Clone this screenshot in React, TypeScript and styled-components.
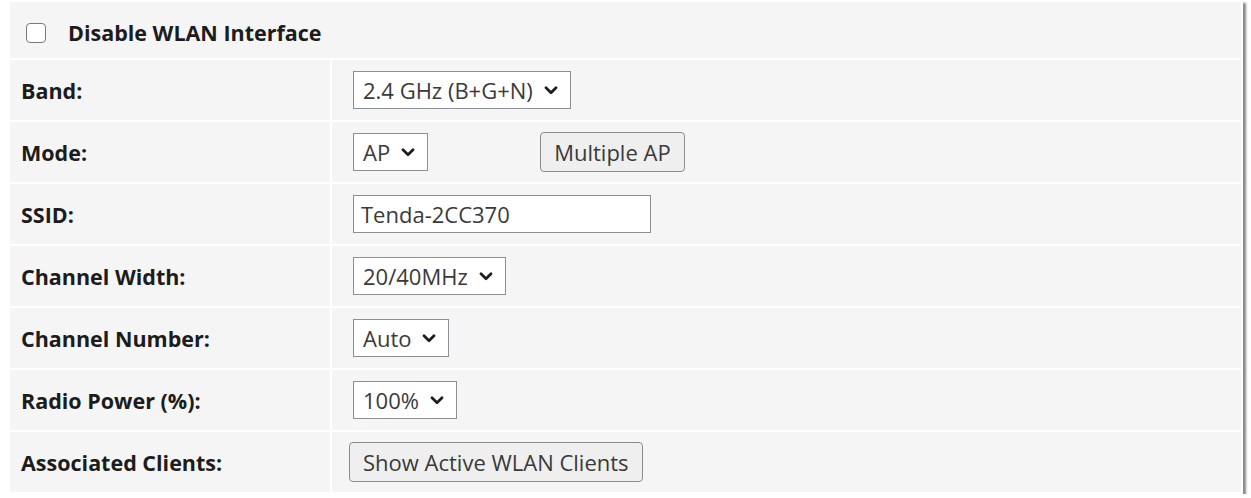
import { createGlobalStyle, styled } from "styled-components";

const GlobalStyle = createGlobalStyle`
    html, body {
        margin: 0;
        padding: 0;
        background: #ffffff;
        font-family: "Open Sans", "Liberation Sans", sans-serif;
    }
`;

type Row = {
    label: string;
    content: React.ReactNode;
};

const Chevron = () => (
    <svg width="14" height="9" viewBox="0 0 14 9" aria-hidden="true">
        <path
            d="M2 1.8 L7 6.8 L12 1.8"
            fill="none"
            stroke="#1c1c1c"
            strokeWidth="2.7"
            strokeLinecap="round"
            strokeLinejoin="round"
        />
    </svg>
);

const Dropdown = ({ value, options }: { value: string; options: string[] }) => (
    <SelectBox>
        <select defaultValue={value}>
            {options.map((o) => (
                <option key={o}>{o}</option>
            ))}
        </select>
        <Chevron />
    </SelectBox>
);

const App = () => {
    const rows: Row[] = [
        {
            label: "Band:",
            content: (
                <Dropdown
                    value="2.4 GHz (B+G+N)"
                    options={["2.4 GHz (B)", "2.4 GHz (G)", "2.4 GHz (N)", "2.4 GHz (B+G+N)"]}
                />
            ),
        },
        {
            label: "Mode:",
            content: (
                <>
                    <Dropdown value="AP" options={["AP", "Client", "WDS", "AP+WDS"]} />
                    <Button $gap={112}>Multiple AP</Button>
                </>
            ),
        },
        {
            label: "SSID:",
            content: <TextInput type="text" defaultValue="Tenda-2CC370" />,
        },
        {
            label: "Channel Width:",
            content: <Dropdown value="20/40MHz" options={["20MHz", "40MHz", "20/40MHz"]} />,
        },
        {
            label: "Channel Number:",
            content: <Dropdown value="Auto" options={["Auto", "1", "6", "11"]} />,
        },
        {
            label: "Radio Power (%):",
            content: <Dropdown value="100%" options={["100%", "70%", "50%", "35%", "15%"]} />,
        },
        {
            label: "Associated Clients:",
            content: <Button $shift={-4}>Show Active WLAN Clients</Button>,
        },
    ];

    return (
        <>
            <GlobalStyle />
            <Page>
                <Table>
                    <tbody>
                        <tr>
                            <HeaderCell colSpan={2}>
                                <CheckLabel>
                                    <input type="checkbox" />
                                    Disable WLAN Interface
                                </CheckLabel>
                            </HeaderCell>
                        </tr>
                        {rows.map((row) => (
                            <tr key={row.label}>
                                <LabelCell>{row.label}</LabelCell>
                                <ValueCell>{row.content}</ValueCell>
                            </tr>
                        ))}
                    </tbody>
                </Table>
            </Page>
        </>
    );
};

const Page = styled.div`
    padding: 0 0 0 8px;
    width: 1235px;
`;

const Table = styled.table`
    width: 1235px;
    border-collapse: separate;
    border-spacing: 2px;
    background: #ffffff;
    box-shadow: 3px 3px 2px #8a8a8a;
    color: #1e1e1e;
`;

const Cell = styled.td`
    background: #f5f5f5;
    height: 60px;
    padding: 0;
    vertical-align: middle;
`;

const HeaderCell = styled(Cell)`
    height: 56px;
    padding: 6px 0 0 16px;
    box-sizing: border-box;
`;

const LabelCell = styled(Cell)`
    width: 309px;
    padding-left: 11px;
    font-size: 21.5px;
    font-weight: 700;
    color: #1c1c1c;
`;

const ValueCell = styled(Cell)`
    padding-left: 21px;
    font-size: 22px;
    color: #3a3a3a;
`;

const CheckLabel = styled.label`
    display: inline-flex;
    align-items: center;
    gap: 22px;
    font-size: 21.5px;
    font-weight: 700;
    color: #1c1c1c;

    input {
        appearance: none;
        margin: 0;
        width: 20px;
        height: 20px;
        border: 1.5px solid #7a7a7a;
        border-radius: 4px;
        background: #ffffff;
    }
`;

const SelectBox = styled.span`
    display: inline-flex;
    align-items: center;
    gap: 11px;
    height: 38px;
    box-sizing: border-box;
    padding: 0 12px 0 9px;
    border: 1.5px solid #8c8f94;
    background: #ffffff;
    vertical-align: middle;

    select {
        appearance: none;
        border: none;
        background: transparent;
        padding: 0;
        margin: 0;
        font-family: "Open Sans", "Liberation Sans", sans-serif;
        font-size: 22px;
        color: #3a3a3a;
        outline: none;
        field-sizing: content;
    }
`;

const Button = styled.button<{ $gap?: number; $shift?: number }>`
    height: 40px;
    margin-left: ${(p) => p.$gap ?? 0}px;
    position: relative;
    left: ${(p) => p.$shift ?? 0}px;
    padding: 0 13px;
    border: 1.5px solid #8c8c8c;
    border-radius: 4px;
    background: #efefef;
    font-family: "Open Sans", "Liberation Sans", sans-serif;
    font-size: 22px;
    color: #3a3a3a;
    vertical-align: middle;
`;

const TextInput = styled.input`
    width: 298px;
    height: 38px;
    box-sizing: border-box;
    padding: 0 7px;
    border: 1.5px solid #8c8f94;
    font-family: "Open Sans", "Liberation Sans", sans-serif;
    font-size: 22px;
    color: #3a3a3a;
    vertical-align: middle;
`;

export default App;
